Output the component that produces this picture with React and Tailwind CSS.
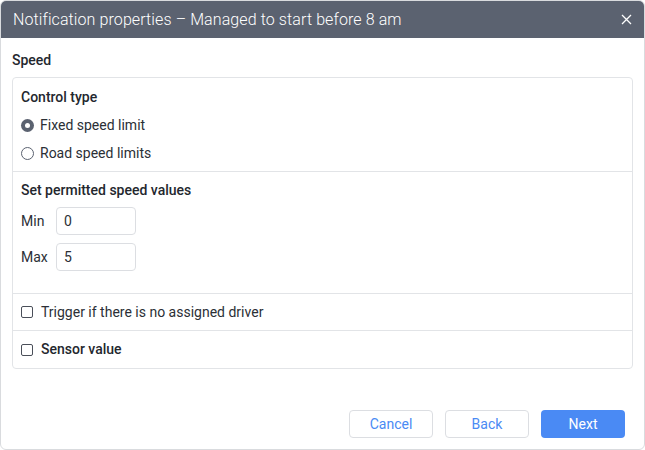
import React from 'react'

function Radio({ checked, label }) {
  return (
    <label className="flex items-center h-[28px]">
      {checked ? (
        <span className="w-[13px] h-[13px] rounded-full bg-[#5b6270] flex items-center justify-center">
          <span className="w-[5px] h-[5px] rounded-full bg-white" />
        </span>
      ) : (
        <span className="w-[13px] h-[13px] rounded-full border border-[#5b6270] bg-white" />
      )}
      <span className="ml-[6px]">{label}</span>
    </label>
  )
}

function Check({ label, bold }) {
  return (
    <label className="flex items-center">
      <span className="w-[12px] h-[12px] rounded-[2px] border border-[#4a4f59] bg-white" />
      <span className={'ml-[8px] ' + (bold ? 'font-medium text-[#23272e]' : '')}>{label}</span>
    </label>
  )
}

export default function App() {
  return (
    <div className="w-[645px] h-[450px] bg-white text-[14px] text-[#2b2f36]" style={{ fontFamily: 'Roboto, "Liberation Sans", sans-serif' }}>
      <div className="w-full h-full flex flex-col border border-[#d9dbde] rounded-[6px] overflow-hidden">
        <div className="h-[37px] bg-[#5b6270] flex items-center justify-between pl-[12px] pr-[11px] shrink-0">
          <span className="text-white text-[16px] font-light tracking-[0.1px]">Notification properties – Managed to start before 8 am</span>
          <svg width="11" height="11" viewBox="0 0 11 11" className="mr-[1px]">
            <path d="M1 1 L10 10 M10 1 L1 10" stroke="white" strokeWidth="1.3" />
          </svg>
        </div>

        <div className="px-[11px] pt-[13px] flex-1">
          <div className="font-medium text-[#23272e] h-[19px] leading-[19px]">Speed</div>

          <div className="mt-[7px] border border-[#e2e4e7] rounded-[4px]">
            <div className="px-[8px] pt-[9px] pb-[4px]">
              <div className="font-medium text-[#23272e] leading-[20px]">Control type</div>
              <div className="mt-[4px]">
                <Radio checked label="Fixed speed limit" />
                <Radio label="Road speed limits" />
              </div>
            </div>

            <div className="border-t border-[#e2e4e7] px-[8px] pt-[8px] pb-[22px]">
              <div className="font-medium text-[#23272e] leading-[20px]">Set permitted speed values</div>
              <div className="mt-[7px] flex items-center">
                <span className="w-[35px]">Min</span>
                <div className="w-[80px] h-[28px] border border-[#dcdee2] rounded-[4px] flex items-center px-[7px]">0</div>
              </div>
              <div className="mt-[8px] flex items-center">
                <span className="w-[35px]">Max</span>
                <div className="w-[80px] h-[28px] border border-[#dcdee2] rounded-[4px] flex items-center px-[7px]">5</div>
              </div>
            </div>

            <div className="border-t border-[#e2e4e7] px-[8px] h-[37px] flex items-center">
              <Check label="Trigger if there is no assigned driver" />
            </div>
            <div className="border-t border-[#e2e4e7] px-[8px] h-[38px] flex items-center">
              <Check label="Sensor value" bold />
            </div>
          </div>
        </div>

        <div className="flex justify-end gap-[12px] pr-[19px] pb-[11px]">
          <button className="w-[84px] h-[28px] border border-[#dcdee2] rounded-[4px] text-[#4a8af4] bg-white">Cancel</button>
          <button className="w-[84px] h-[28px] border border-[#dcdee2] rounded-[4px] text-[#4a8af4] bg-white">Back</button>
          <button className="w-[84px] h-[28px] rounded-[4px] text-white bg-[#4a8af4]">Next</button>
        </div>
      </div>
    </div>
  )
}
